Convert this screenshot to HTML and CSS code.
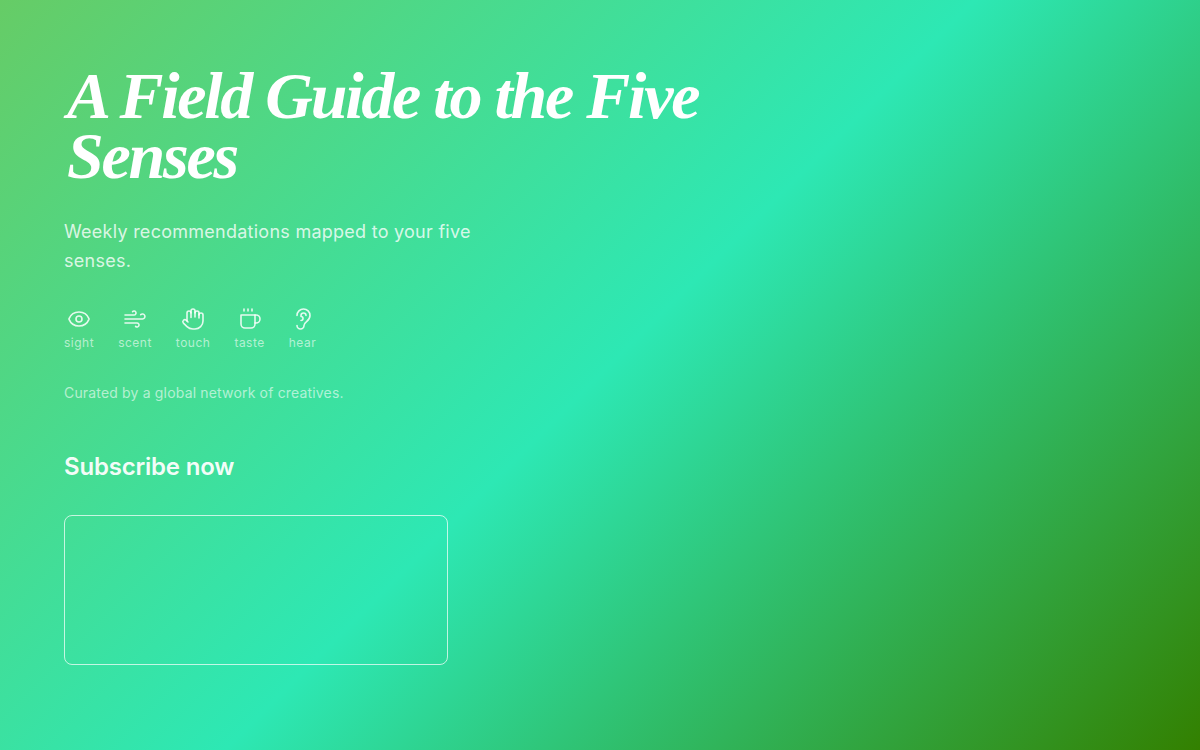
FILE: index.html
```html
<!DOCTYPE html>
<html lang="en">
<head>
  <meta charset="UTF-8">
  <title>A Field Guide to the Five Senses</title>
  <link rel="stylesheet" href="styles.css">
</head>
<body>
  <main class="hero">
    <h1>A Field Guide to the Five Senses</h1>
    <p class="intro">Weekly recommendations mapped to your five senses.</p>

    <ul class="senses">
      <li>
        <svg viewBox="0 0 24 24"><path d="M2.06 12.35a1 1 0 0 1 0-.7 10.75 10.75 0 0 1 19.88 0 1 1 0 0 1 0 .7 10.75 10.75 0 0 1-19.88 0"/><circle cx="12" cy="12" r="3"/></svg>
        <span>sight</span>
      </li>
      <li>
        <svg viewBox="0 0 24 24"><path d="M17.7 7.7a2.5 2.5 0 1 1 1.8 4.3H2"/><path d="M9.6 4.6A2 2 0 1 1 11 8H2"/><path d="M12.6 19.4A2 2 0 1 0 14 16H2"/></svg>
        <span>scent</span>
      </li>
      <li>
        <svg viewBox="0 0 24 24"><path d="M18 11V6a2 2 0 0 0-4 0"/><path d="M14 10V4a2 2 0 0 0-4 0v2"/><path d="M10 10.5V6a2 2 0 0 0-4 0v8"/><path d="M18 8a2 2 0 1 1 4 0v6a8 8 0 0 1-8 8h-2c-2.8 0-4.5-.86-5.99-2.34l-3.6-3.6a2 2 0 0 1 2.83-2.82L7 15"/></svg>
        <span>touch</span>
      </li>
      <li>
        <svg viewBox="0 0 24 24"><path d="M17 8h1a4 4 0 1 1 0 8h-1"/><path d="M3 8h14v9a4 4 0 0 1-4 4H7a4 4 0 0 1-4-4Z"/><path d="M6 2v2M10 2v2M14 2v2"/></svg>
        <span>taste</span>
      </li>
      <li>
        <svg viewBox="0 0 24 24"><path d="M6 8.5a6.5 6.5 0 1 1 13 0c0 6-6 6-6 10a3.5 3.5 0 1 1-7 0"/><path d="M15 8.5a2.5 2.5 0 0 0-5 0v1a2 2 0 1 1 0 4"/></svg>
        <span>hear</span>
      </li>
    </ul>

    <p class="curated">Curated by a global network of creatives.</p>

    <h2>Subscribe now</h2>
    <div class="signup"></div>
  </main>
</body>
</html>
```

FILE: styles.css
```css
html, body {
  margin: 0;
  height: 100%;
}

body {
  background: linear-gradient(135deg, #66cc66 0%, #2de8b4 50%, #338000 100%);
  color: #fff;
  font-family: "Inter", "Liberation Sans", sans-serif;
  overflow: hidden;
}

.hero {
  padding: 64px;
}

h1 {
  width: 672px;
  margin: 0 0 31px;
  padding: 2px 0 0 3px;
  font-family: "Liberation Serif", serif;
  font-style: italic;
  font-weight: bold;
  font-size: 66px;
  line-height: 60px;
  letter-spacing: -2.25px;
}

.intro {
  width: 420px;
  margin: 0 0 32px;
  font-size: 18px;
  line-height: 29px;
  letter-spacing: 0.26px;
  color: rgba(255, 255, 255, 0.8);
}

.senses {
  display: flex;
  gap: 24px;
  margin: 0 0 32px;
  padding: 0;
  list-style: none;
}

.senses li {
  display: flex;
  flex-direction: column;
  align-items: center;
  gap: 4px;
}

.senses svg {
  width: 24px;
  height: 24px;
  fill: none;
  stroke: rgba(255, 255, 255, 0.85);
  stroke-width: 1.6;
  stroke-linecap: round;
  stroke-linejoin: round;
}

.senses span {
  font-size: 12px;
  line-height: 16px;
  letter-spacing: 0.5px;
  color: rgba(255, 255, 255, 0.6);
}

.curated {
  margin: 0 0 48px;
  font-size: 14px;
  line-height: 20px;
  letter-spacing: 0.17px;
  color: rgba(255, 255, 255, 0.6);
}

h2 {
  margin: 0 0 32px;
  font-size: 24px;
  line-height: 32px;
  font-weight: 600;
  letter-spacing: -0.2px;
  color: rgba(255, 255, 255, 0.95);
}

.signup {
  width: 382px;
  height: 148px;
  border: 1px solid rgba(255, 255, 255, 0.7);
  border-radius: 8px;
}
```
